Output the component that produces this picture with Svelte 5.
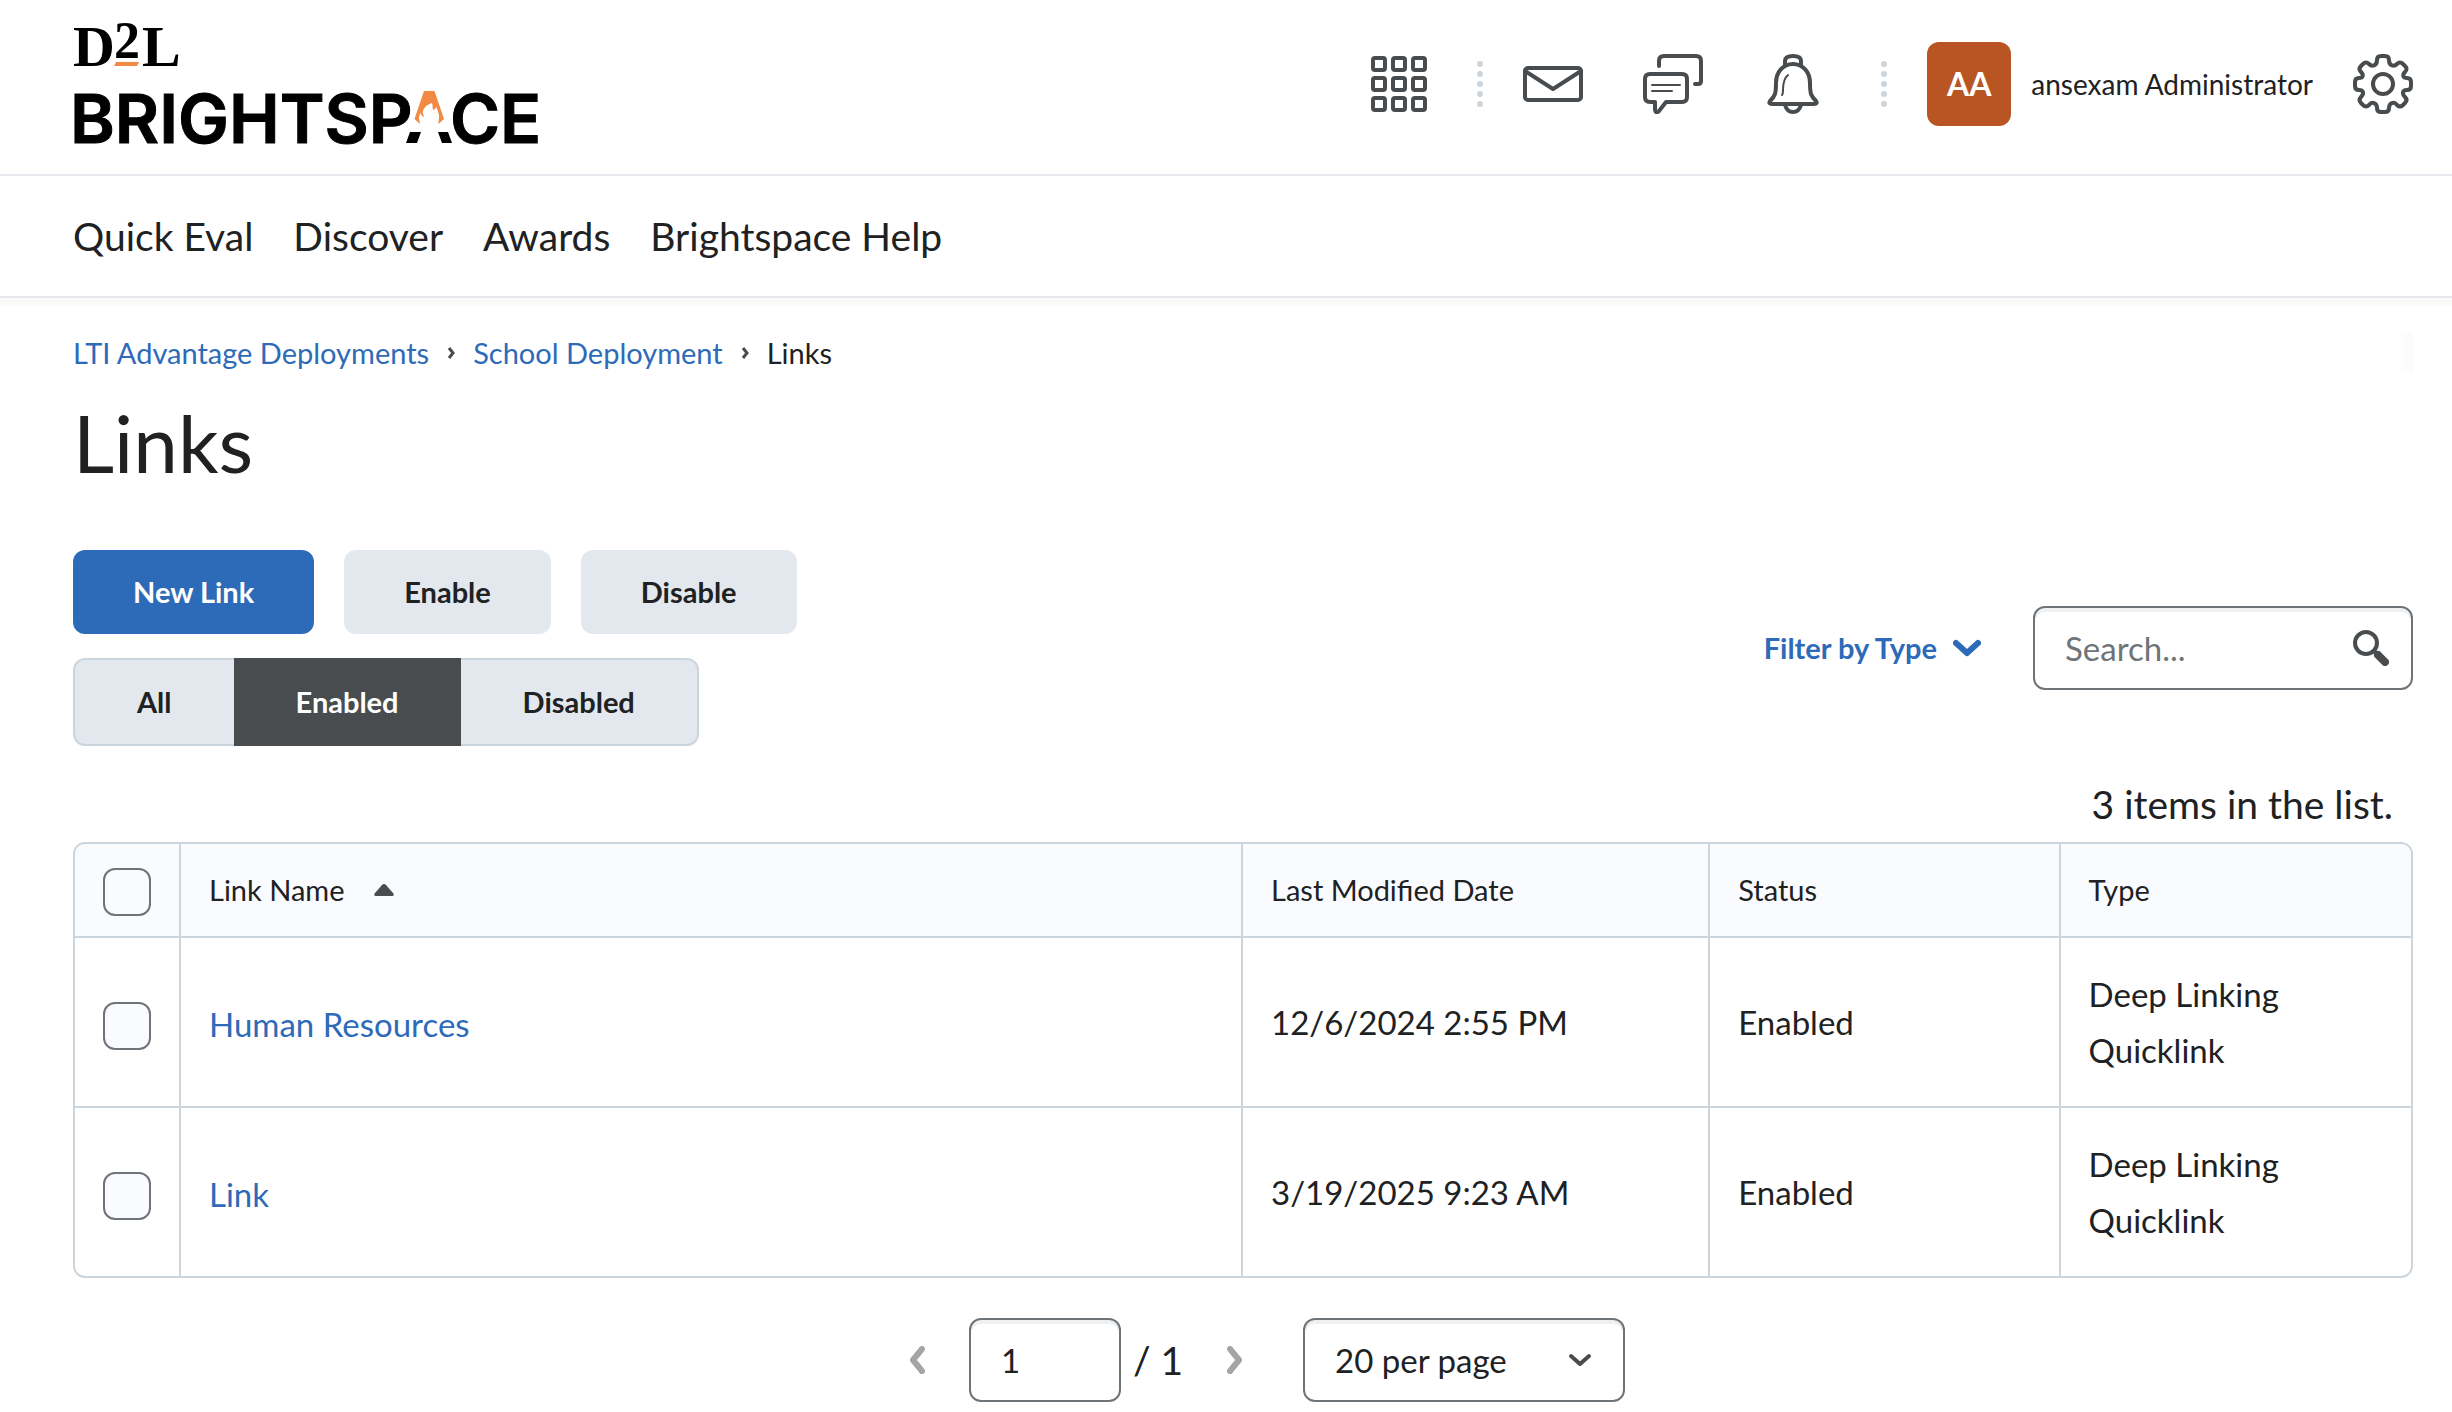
<script lang="ts">
  // LTI Advantage deployment: links list.
  type LinkRow = { id: number; name: string; modified: string; status: string; type: string[] };

  const navLinks = ['Quick Eval', 'Discover', 'Awards', 'Brightspace Help'];
  const crumbs = ['LTI Advantage Deployments', 'School Deployment'];
  const filters = ['All', 'Enabled', 'Disabled'];

  const rows: LinkRow[] = [
    { id: 1, name: 'Human Resources', modified: '12/6/2024 2:55 PM', status: 'Enabled', type: ['Deep Linking', 'Quicklink'] },
    { id: 2, name: 'Link', modified: '3/19/2025 9:23 AM', status: 'Enabled', type: ['Deep Linking', 'Quicklink'] },
  ];

  let activeFilter = $state('Enabled');
  let selected = $state<number[]>([]);
  let search = $state('');
  let page = $state('1');
  let perPage = $state('20');

  let allSelected = $derived(selected.length === rows.length);

  function toggleAll() {
    selected = allSelected ? [] : rows.map((r) => r.id);
  }
</script>

{#snippet separator()}
  <svg class="dots" width="6" height="46" viewBox="0 0 6 46" aria-hidden="true">
    {#each [3, 13, 23, 33, 43] as cy}
      <circle cx="3" {cy} r="3" />
    {/each}
  </svg>
{/snippet}

<header class="topbar">
  <a class="logo" href="#home" aria-label="D2L Brightspace">
    <svg width="482" height="160" viewBox="63 8 482 160">
      <text class="d2l" x="73" y="66">D</text>
      <text class="d2l two" x="114" y="58">2</text>
      <text class="d2l" x="142" y="66">L</text>
      <path class="orange" d="M116 62h23l-2 4h-23z" />
      <text class="word" x="70" y="143">BRIGHTSP</text>
      <text class="word" x="450" y="143">CE</text>
      <path class="orange" d="M424 91h10.500l9.500 28-5.500 5c-.5-2 1-6 .5-9l-2.500-8-2.500 3c-2 0-1-5-2-7-6 2-8 5-9 8-1 3 1 3 1 6-2-1-3-2-3.500-4-3 5-.5 7-.5 11l-5.500-5z" />
      <path d="M410 132h11l-4 11h-11zM438 132h10l4 11h-10z" />
    </svg>
  </a>

  <div class="tools">
    <button type="button" class="icon" aria-label="Select a course">
      <svg width="60" height="60" viewBox="0 0 60 60">
        {#each [4, 24, 44] as y}
          {#each [4, 24, 44] as x}
            <rect {x} {y} width="12" height="12" rx="2" />
          {/each}
        {/each}
      </svg>
    </button>
    {@render separator()}
    <div class="alerts">
      <button type="button" class="icon" aria-label="Messages">
        <svg width="60" height="60" viewBox="0 0 60 60">
          <rect x="2" y="14" width="56" height="32" rx="3" />
          <path d="M2 17l28 18 28-18" />
        </svg>
      </button>
      <button type="button" class="icon" aria-label="Subscriptions">
        <svg width="60" height="60" viewBox="0 0 60 60">
          <path d="M16 12V7q0-5 5-5h32q5 0 5 5v20q0 3-3 3h-3" />
          <path d="M7 20h32q5 0 5 5v18q0 5-5 5H23l-7 9q-3 3-4-1v-8H7q-5 0-5-5V25q0-5 5-5z" />
          <path class="thin" d="M9 31h28M9 37h20" />
        </svg>
      </button>
      <button type="button" class="icon" aria-label="Updates">
        <svg width="60" height="60" viewBox="0 0 60 60">
          <path d="M30 10c-10 0-17 8-17 19 0 11-1 13-6 18q-2 3 2 3h42q4 0 2-3c-5-5-6-7-6-18 0-11-7-19-17-19z" />
          <path d="M22 11V7q0-5 8-5t8 5v4M22 51q2 7 8 7t8-7" />
          <path class="thin" d="M25 21c-5 4-5 11-5 15 0 2 0 4-1 5" />
        </svg>
      </button>
    </div>
    {@render separator()}
    <button type="button" class="user">
      <span class="avatar">AA</span>
      <span>ansexam Administrator</span>
    </button>
    <button type="button" class="icon" aria-label="Admin Tools">
      <svg width="60" height="60" viewBox="0 0 60 60">
        <path d="M24 6q0-4 4-4h4q4 0 4 4c0 6 5 7 8 4q3-3 6 0l2 2q3 3 0 6c-3 3-2 6 2 6q4 0 4 4v4q0 4-4 4c-5 0-5 4-2 7q3 3 0 6l-2 2q-3 3-6 0c-3-4-8-2-8 3q0 4-4 4h-4q-4 0-4-4c0-5-5-7-8-3q-3 3-6 0l-2-2q-3-3 0-6c3-3 3-7-2-7q-4 0-4-4v-4q0-4 4-4c4 0 5-3 2-6q-3-3 0-6l2-2q3-3 6 0c3 3 8 2 8-4z" />
        <circle cx="30" cy="30" r="10" />
      </svg>
    </button>
  </div>
</header>

<nav class="mainnav" aria-label="Main">
  {#each navLinks as label}
    <a href="#nav">{label}</a>
  {/each}
</nav>

<main>
  <nav class="crumbs" aria-label="Breadcrumb">
    {#each crumbs as crumb}
      <a href="#crumb">{crumb}</a>
      <svg width="8" height="14" viewBox="0 0 8 14" aria-hidden="true"><path d="M2 2l4 5-4 5" /></svg>
    {/each}
    <span>Links</span>
  </nav>

  <h1>Links</h1>

  <div class="controls">
    <div class="actions">
      <div class="buttons">
        <button type="button" class="btn primary">New Link</button>
        <button type="button" class="btn">Enable</button>
        <button type="button" class="btn">Disable</button>
      </div>
      <div class="segments">
        {#each filters as f}
          <button type="button" class:active={activeFilter === f} onclick={() => (activeFilter = f)}>{f}</button>
        {/each}
      </div>
    </div>

    <div class="find">
      <button type="button" class="filter">
        Filter by Type
        <svg width="28" height="18" viewBox="0 0 28 18" aria-hidden="true"><path d="M3 4l11 10L25 4" /></svg>
      </button>
      <div class="field search">
        <input type="text" placeholder="Search..." aria-label="Search" bind:value={search} />
        <button type="button" aria-label="Search">
          <svg width="36" height="36" viewBox="0 0 36 36">
            <circle cx="13" cy="13" r="11" />
            <path class="stem" d="M21 21l3 3" />
            <path class="handle" d="M25 25l7 7" />
          </svg>
        </button>
      </div>
    </div>
  </div>

  <p class="count">3 items in the list.</p>

  <table>
    <colgroup>
      <col class="c-check" />
      <col />
      <col class="c-date" />
      <col class="c-small" />
      <col class="c-small" />
    </colgroup>
    <thead>
      <tr>
        <th class="check"><input type="checkbox" aria-label="Select all" checked={allSelected} onchange={toggleAll} /></th>
        <th>
          <button type="button" class="sort">
            Link Name
            <svg width="20" height="12" viewBox="0 0 20 12" aria-hidden="true"><path d="M8 1q2-2 4 0l7 8q2 3-1 3H2q-3 0-1-3z" /></svg>
          </button>
        </th>
        <th>Last Modified Date</th>
        <th>Status</th>
        <th>Type</th>
      </tr>
    </thead>
    <tbody>
      {#each rows as row (row.id)}
        <tr>
          <td class="check"><input type="checkbox" aria-label="Select {row.name}" value={row.id} bind:group={selected} /></td>
          <td class="name"><a href="#link-{row.id}">{row.name}</a></td>
          <td>{row.modified}</td>
          <td>{row.status}</td>
          <td>{#each row.type as t}<div>{t}</div>{/each}</td>
        </tr>
      {/each}
    </tbody>
  </table>

  <div class="pager">
    <button type="button" class="step" aria-label="Previous page" disabled>
      <svg width="16" height="28" viewBox="0 0 16 28"><path d="M13 3L4 14l9 11" /></svg>
    </button>
    <div class="pages">
      <input class="field page" type="text" aria-label="Page number" bind:value={page} />
      <span>/ 1</span>
    </div>
    <button type="button" class="step" aria-label="Next page" disabled>
      <svg width="16" height="28" viewBox="0 0 16 28"><path d="M3 3l9 11-9 11" /></svg>
    </button>
    <div class="perpage">
      <select class="field" aria-label="Results per page" bind:value={perPage}>
        <option value="10">10 per page</option>
        <option value="20">20 per page</option>
        <option value="50">50 per page</option>
      </select>
      <svg width="24" height="14" viewBox="0 0 24 14" aria-hidden="true"><path d="M3 3l9 8 9-8" /></svg>
    </div>
  </div>
</main>

<style>
  :global(body) {
    background: #fff; color: #202122;
    font-family: Lato, 'Open Sans', sans-serif; font-size: 39px; line-height: 56px;
  }
  button, input, select { font: inherit; color: inherit; box-sizing: border-box; }
  button { background: none; border: 0; padding: 0; cursor: pointer; }
  svg { display: block; flex: none; }
  a { color: #2d6bb8; text-decoration: none; }
  a:hover { text-decoration: underline; }

  .topbar {
    display: flex; justify-content: space-between; align-items: flex-start;
    padding: 8px 39px 6px 63px; border-bottom: 2px solid #e7e9ef;
  }
  .logo { color: #000; }
  .d2l { font-family: 'Liberation Serif', serif; font-weight: 700; font-size: 58px; }
  .two { font-size: 52px; }
  .word { font-family: Inter, sans-serif; font-weight: 600; font-size: 68px; stroke: #000; stroke-width: 1; }
  .orange { fill: #f28a43; }

  .tools { display: flex; align-items: center; gap: 40px; padding-top: 34px; }
  .alerts { display: flex; gap: 60px; margin-right: 10px; }
  .icon svg { fill: none; stroke: #494c4e; stroke-width: 4; stroke-linecap: round; stroke-linejoin: round; }
  .icon .thin { stroke-width: 2; }
  .dots { fill: #cdd5dc; margin-left: 8px; }
  .user { display: flex; align-items: center; gap: 20px; font-size: 28px; line-height: 40px; }
  .avatar {
    display: grid; place-items: center; width: 84px; height: 84px;
    border-radius: 12px; background: #b85522; color: #fff; font-size: 32px; font-weight: 700;
  }

  .mainnav {
    display: flex; gap: 40px; padding: 32px 73px;
    border-bottom: 2px solid #e7e9ef; box-shadow: 0 8px 0 #fafafa;
  }
  .mainnav a { color: #202122; }

  main { padding: 34px 39px 10px 73px; }
  .crumbs {
    display: flex; align-items: center; gap: 18px; font-size: 29px; line-height: 42px;
    background: linear-gradient(to right, #fff, #fbfbfb) right / 16px 100% no-repeat;
  }
  .crumbs svg { fill: none; stroke: #494c4e; stroke-width: 3; }
  h1 { margin: 18px 0 58px; font-size: 80px; font-weight: 400; line-height: 100px; }

  .controls { display: flex; justify-content: space-between; align-items: center; }
  .buttons { display: flex; gap: 30px; margin-bottom: 24px; }
  .btn {
    height: 84px; padding: 0 60px; border-radius: 12px; background: #e3e8ef;
    font-size: 29px; font-weight: 700; line-height: 40px;
  }
  .btn.primary { background: #2d6bb8; color: #fff; }
  .segments { display: flex; }
  .segments button {
    height: 88px; padding: 0 62px; background: #e3e8ef; border: 2px solid #cdd5dc;
    font-size: 29px; font-weight: 700; line-height: 40px;
  }
  .segments button + button { margin-left: -2px; border-left-width: 0; }
  .segments button:first-child { border-radius: 12px 0 0 12px; }
  .segments button:last-child { border-radius: 0 12px 12px 0; }
  .segments .active { background: #494c4e; border-color: #494c4e; color: #fff; }

  .find { display: flex; align-items: center; gap: 52px; }
  .filter { display: flex; align-items: center; gap: 16px; color: #2d6bb8; font-size: 29px; font-weight: 700; line-height: 40px; }
  .filter svg { fill: none; stroke: #2d6bb8; stroke-width: 6; stroke-linecap: round; stroke-linejoin: round; }
  .field {
    height: 84px; box-sizing: border-box; border: 2px solid #6e7477; border-radius: 12px;
    background: #fff; box-shadow: inset 0 4px 0 #eff0f2; font-size: 33px; line-height: 40px;
  }
  .search { display: flex; align-items: center; width: 380px; padding: 0 22px 0 30px; }
  .search input { flex: 1; min-width: 0; border: 0; padding: 0; background: none; outline: none; }
  .search input::placeholder { color: #6e7477; opacity: 1; }
  .search svg { fill: none; stroke: #494c4e; stroke-linecap: round; stroke-width: 4; }
  .search .handle { stroke-width: 8; }

  .count { margin: 30px 20px 10px; text-align: right; }

  table {
    width: 100%; table-layout: fixed; border-collapse: separate; border-spacing: 0;
    border: 2px solid #cdd5dc; border-radius: 12px; font-size: 33px;
  }
  .c-check { width: 106px; }
  .c-date { width: 20%; }
  .c-small { width: 15%; }
  th, td { padding: 28px; text-align: left; font-weight: 400; border-right: 2px solid #cdd5dc; }
  th:last-child, td:last-child { border-right: 0; }
  td { border-top: 2px solid #cdd5dc; }
  th { padding: 22px 28px; background: #f9fbff; font-size: 29px; line-height: 48px; }
  th.check { padding: 24px 28px 20px; }
  td.check { padding: 32px 28px 24px; }
  td.name { padding: 30px 28px 26px; }
  th:first-child { border-top-left-radius: 10px; }
  th:last-child { border-top-right-radius: 10px; }
  .sort { display: flex; align-items: center; gap: 30px; }
  .sort svg { fill: #494c4e; }
  input[type='checkbox'] {
    appearance: none; display: block; width: 48px; height: 48px; margin: 0;
    border: 2px solid #6e7477; border-radius: 12px; background: #f9fbff;
  }
  input[type='checkbox']:checked { background: #2d6bb8; }

  .pager { display: flex; justify-content: center; align-items: center; padding: 40px 0 0 48px; }
  .step svg { fill: none; stroke: #a4a5a6; stroke-width: 6; stroke-linecap: round; stroke-linejoin: round; }
  .pages { display: flex; align-items: center; gap: 12px; margin: 0 44px; }
  .page { width: 152px; padding: 0 30px; }
  .perpage { display: grid; align-items: center; margin-left: 60px; }
  .perpage > * { grid-area: 1 / 1; }
  .perpage select { appearance: none; width: 322px; padding: 0 30px; }
  .perpage svg { justify-self: end; margin-right: 33px; fill: none; stroke: #494c4e; stroke-width: 4; stroke-linecap: round; stroke-linejoin: round; pointer-events: none; }
</style>
